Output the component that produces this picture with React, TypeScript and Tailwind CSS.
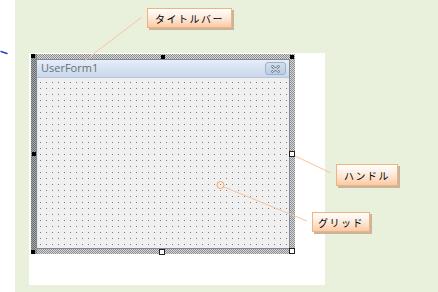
import React from "react";

const hatch =
  "bg-[repeating-conic-gradient(#8f8f8f_0_25%,#d6d6d6_0_50%)] bg-[length:2px_2px]";

const Callout: React.FC<{ label: string; className: string }> = ({ label, className }) => (
  <div
    className={`absolute flex items-center justify-center border border-[#f2b27c] bg-gradient-to-b from-white via-[#fde9da] to-[#fbcaa6] shadow-[2px_2px_0_#c9b59c] text-[10px] tracking-[1.5px] text-black ${className}`}
    style={{ fontFamily: '"Noto Sans CJK JP", "Noto Sans", sans-serif' }}
  >
    {label}
  </div>
);

const Dark = () => <div className="h-[4px] w-[4px] bg-black" />;
const Light = () => <div className="h-[6px] w-[6px] border border-[#222] bg-white" />;

export default function App() {
  return (
    <div className="relative flex w-[438px] h-[292px] overflow-hidden bg-white">
      {/* left strip */}
      <div className="relative w-[15px] shrink-0">
        <svg className="absolute left-0 top-[49px]" width="10" height="8" viewBox="0 0 10 8">
          <path d="M1 2.5 L7 4.5" stroke="#2040d0" strokeWidth="1.4" strokeLinecap="round" />
        </svg>
      </div>

      {/* green board */}
      <div className="flex-1 bg-[#e9f1dc] pl-[14px] pt-[53px]">
        <div className="w-[296px] h-[232px] bg-white pl-[2px] pt-[1px]">
          {/* selection frame */}
          <div className={`relative w-[264px] h-[200px] p-[5px] shadow-[inset_6px_0_0_rgba(0,0,0,0.22)] ${hatch}`}>
            <div className="flex h-full flex-col border border-[#7d8b9b] bg-[#f0f0f0]">
              {/* title bar */}
              <div className="flex h-[18px] shrink-0 items-center justify-between bg-gradient-to-b from-[#e6eef8] to-[#c8d7ea] pl-[4px] pr-[3px] border-b border-[#b7c6d8]">
                <span
                  className="text-[11px] text-[#66707a]"
                  style={{ fontFamily: '"Open Sans", "Liberation Sans", sans-serif' }}
                >
                  UserForm1
                </span>
                <div className="flex h-[13px] w-[21px] items-center justify-center rounded-[3px] border border-[#9fb2ca] bg-gradient-to-b from-[#d3dfee] to-[#bccde3]">
                  <svg width="9" height="8" viewBox="0 0 9 8">
                    <path d="M1.5 1.5 L7.5 6.5 M7.5 1.5 L1.5 6.5" stroke="#6d809a" strokeWidth="2.6" strokeLinecap="round" />
                    <path d="M1.5 1.5 L7.5 6.5 M7.5 1.5 L1.5 6.5" stroke="#f4f8fc" strokeWidth="1" strokeLinecap="round" />
                  </svg>
                </div>
              </div>
              {/* dot grid */}
              <div className="flex-1 border-l border-[#dfe7f2] bg-[conic-gradient(at_1px_1px,transparent_75%,#7a7a7a_0)] bg-[length:6px_6px] bg-[position:2px_4px]" />
            </div>

            {/* handles */}
            <div className="pointer-events-none absolute inset-0 flex flex-col justify-between">
              <div className="flex items-start justify-between pl-0 pr-[1px] pt-0">
                <Dark />
                <div className="mt-[1px]"><Dark /></div>
                <div className="mt-[1px]"><Dark /></div>
              </div>
              <div className="flex items-center justify-between pl-[1px] pr-0">
                <Dark />
                <Light />
              </div>
              <div className="flex items-end justify-between pr-0">
                <Dark />
                <div className="mb-[-1px]"><Light /></div>
                <Light />
              </div>
            </div>
          </div>
        </div>
      </div>

      {/* leader lines */}
      <svg className="pointer-events-none absolute inset-0" width="438" height="292">
        <g stroke="#f7c49c" strokeWidth="1" fill="none">
          <line x1="142" y1="17" x2="84" y2="61" />
          <line x1="295" y1="156" x2="331" y2="173" />
          <line x1="224" y1="187" x2="307" y2="221" />
          <circle cx="220.5" cy="185" r="3.5" stroke="#f2a865" />
        </g>
      </svg>

      <Callout label="タイトルバー" className="left-[147px] top-[8px] h-[20px] w-[85px]" />
      <Callout label="ハンドル" className="left-[336px] top-[164px] h-[22px] w-[62px]" />
      <Callout label="グリッド" className="left-[312px] top-[212px] h-[20px] w-[58px]" />
    </div>
  );
}
